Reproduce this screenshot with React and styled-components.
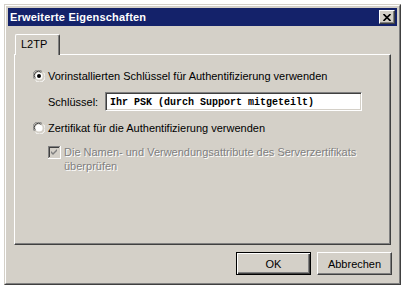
import React from "react";
import styled, { createGlobalStyle } from "styled-components";

const GlobalStyle = createGlobalStyle`
  html, body {
    margin: 0;
    padding: 0;
    background: #ffffff;
  }
  body {
    font-family: "Liberation Sans", Arial, sans-serif;
    font-size: 11px;
    color: #000000;
  }
`;

const Window = styled.div`
  box-sizing: border-box;
  margin: 4px 0 0 4px;
  width: 397px;
  height: 281px;
  background: #d4d0c8;
  border: 1px solid;
  border-color: #d4d0c8 #404040 #404040 #d4d0c8;
  display: flex;
  flex-direction: column;
`;

const Frame = styled.div`
  flex: 1;
  display: flex;
  flex-direction: column;
  border: 1px solid;
  border-color: #ffffff #808080 #808080 #ffffff;
  padding: 2px;
`;

const TitleBar = styled.div`
  height: 18px;
  background: #14226a;
  display: flex;
  align-items: center;
  justify-content: space-between;
  padding: 0 2px 0 2px;
`;

const Title = styled.span`
  color: #ffffff;
  font-weight: bold;
  font-size: 11px;
  letter-spacing: 0.2px;
`;

const CloseButton = styled.div`
  box-sizing: border-box;
  width: 16px;
  height: 14px;
  background: #d4d0c8;
  border: 1px solid;
  border-color: #ffffff #404040 #404040 #ffffff;
  box-shadow: inset -1px -1px 0 #808080;
  display: flex;
  align-items: center;
  justify-content: center;
`;

const Body = styled.div`
  flex: 1;
  display: flex;
  flex-direction: column;
  padding: 8px 6px 5px 6px;
`;

const TabStrip = styled.div`
  display: flex;
  height: 20px;
  position: relative;
  z-index: 1;
`;

const Tab = styled.div`
  box-sizing: border-box;
  margin-left: 1px;
  width: 45px;
  height: 21px;
  background: #d4d0c8;
  border-top: 1px solid #ffffff;
  border-left: 1px solid #ffffff;
  border-right: 1px solid #404040;
  box-shadow: inset -1px 0 0 #808080;
  border-radius: 2px 2px 0 0;
  padding: 3px 0 0 5px;
`;

const Panel = styled.div`
  box-sizing: border-box;
  height: 191px;
  border: 1px solid;
  border-color: #ffffff #404040 #404040 #ffffff;
  box-shadow: inset -1px -1px 0 #808080;
  padding: 14px 0 0 18px;
  display: flex;
  flex-direction: column;
`;

const OptionRow = styled.label`
  display: flex;
  align-items: center;
  gap: 3px;
  height: 14px;
  margin-top: ${(p) => p.$top || 0}px;
`;

const KeyRow = styled.div`
  display: flex;
  align-items: center;
  margin: 9px 0 0 15px;
`;

const KeyLabel = styled.span`
  width: 57px;
`;

const KeyInput = styled.div`
  box-sizing: border-box;
  width: 257px;
  height: 19px;
  background: #ffffff;
  border: 1px solid;
  border-color: #808080 #ffffff #ffffff #808080;
  box-shadow: inset 1px 1px 0 #404040, inset -1px -1px 0 #d4d0c8;
  font-family: "Liberation Mono", "Courier New", monospace;
  font-weight: bold;
  font-size: 10px;
  display: flex;
  align-items: center;
  padding: 1px 0 0 4px;
`;

const CheckRow = styled.div`
  display: flex;
  align-items: flex-start;
  gap: 3px;
  margin: 11px 0 0 15px;
`;

const DisabledText = styled.span`
  color: #808080;
  text-shadow: 1px 1px 0 #ffffff;
  line-height: 14px;
  width: 312px;
  margin-top: -1px;
`;

const Footer = styled.div`
  display: flex;
  justify-content: flex-end;
  gap: 6px;
  margin: 7px -1px 0 0;
`;

const Button = styled.div`
  box-sizing: border-box;
  width: 75px;
  height: 23px;
  background: #d4d0c8;
  display: flex;
  align-items: center;
  justify-content: center;
  border: 1px solid;
  border-color: ${(p) =>
    p.$default ? "#000000" : "#ffffff #404040 #404040 #ffffff"};
  box-shadow: ${(p) =>
    p.$default
      ? "inset 1px 1px 0 #ffffff, inset -1px -1px 0 #404040, inset -2px -2px 0 #808080"
      : "inset -1px -1px 0 #808080"};
`;

const Radio = ({ checked }) => (
  <svg width="12" height="12" viewBox="0 0 12 12">
    <path d="M1.5 9 A5 5 0 0 1 9 1.5" fill="none" stroke="#808080" />
    <path d="M2.5 8.2 A4 4 0 0 1 8.2 2.5" fill="none" stroke="#404040" />
    <path d="M9.5 3 A5 5 0 0 1 3 9.5" fill="none" stroke="#d4d0c8" />
    <path d="M10.5 2.6 A5.5 5.5 0 0 1 2.6 10.5" fill="none" stroke="#ffffff" />
    <circle cx="6" cy="6" r="3.6" fill="#ffffff" />
    {checked && <circle cx="6" cy="6" r="2" fill="#000000" />}
  </svg>
);

const DisabledCheck = () => (
  <svg width="13" height="13" viewBox="0 0 13 13">
    <rect x="0" y="0" width="13" height="13" fill="#ffffff" />
    <rect x="0" y="0" width="12" height="12" fill="#808080" />
    <rect x="1" y="1" width="11" height="11" fill="#d4d0c8" />
    <rect x="1" y="1" width="10" height="10" fill="#404040" />
    <rect x="2" y="2" width="9" height="9" fill="#d4d0c8" />
    <path d="M3 5 L5 7 L9 3 L9 5 L5 9 L3 7 Z" fill="#808080" />
  </svg>
);

const CloseIcon = () => (
  <svg width="8" height="7" viewBox="0 0 8 7">
    <path d="M0.5 0 L7.5 7 M7.5 0 L0.5 7" stroke="#000" strokeWidth="1.6" />
  </svg>
);

export default function App() {
  return (
    <>
      <GlobalStyle />
      <Window>
        <Frame>
          <TitleBar>
            <Title>Erweiterte Eigenschaften</Title>
            <CloseButton>
              <CloseIcon />
            </CloseButton>
          </TitleBar>
          <Body>
            <TabStrip>
              <Tab>L2TP</Tab>
            </TabStrip>
            <Panel>
              <OptionRow>
                <Radio checked />
                <span>Vorinstallierten Schlüssel für Authentifizierung verwenden</span>
              </OptionRow>
              <KeyRow>
                <KeyLabel>Schlüssel:</KeyLabel>
                <KeyInput>Ihr PSK (durch Support mitgeteilt)</KeyInput>
              </KeyRow>
              <OptionRow $top={10}>
                <Radio />
                <span>Zertifikat für die Authentifizierung verwenden</span>
              </OptionRow>
              <CheckRow>
                <DisabledCheck />
                <DisabledText>
                  Die Namen- und Verwendungsattribute des Serverzertifikats überprüfen
                </DisabledText>
              </CheckRow>
            </Panel>
            <Footer>
              <Button $default>OK</Button>
              <Button>Abbrechen</Button>
            </Footer>
          </Body>
        </Frame>
      </Window>
    </>
  );
}
